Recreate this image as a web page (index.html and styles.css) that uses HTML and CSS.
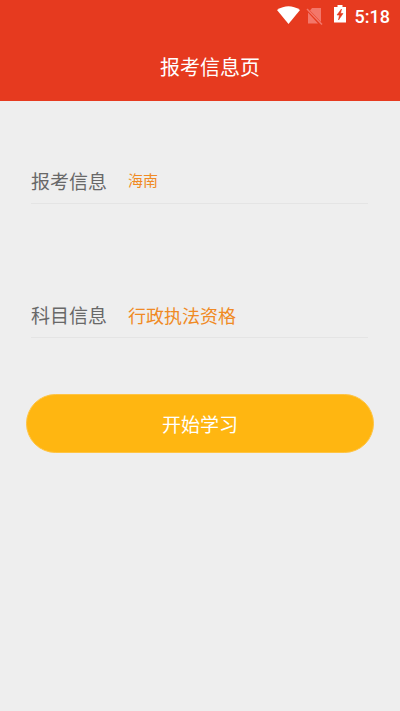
FILE: index.html
```html
<!DOCTYPE html>
<html lang="zh-CN">
<head>
<meta charset="utf-8">
<title>报考信息页</title>
<link rel="stylesheet" href="styles.css">
</head>
<body>
<header class="header">
  <div class="status">
    <svg class="wifi" width="23" height="18" viewBox="0 0 23 18"><path d="M0 4Q11.500 -3.500 23 4L11.500 18Z" fill="#fff"/></svg>
    <svg class="sim" width="17" height="18" viewBox="0 0 17 18"><path d="M6 1H15V15L4 3.500ZM2 5.500L12 16.500H2Z" fill="#f3776a"/><path d="M1 2L16 17.500" stroke="#f3776a" stroke-width="1.500"/></svg>
    <svg class="battery" width="12" height="18" viewBox="0 0 12 18"><path d="M3.500 0H8.500V2H12V17.500H0V2H3.500Z" fill="#fff"/><path d="M7.500 4L3 10H5.500L4.500 15L9 8.500H6.500Z" fill="#e63a1f" stroke="#e63a1f" stroke-width=".6"/></svg>
    <span class="time">5:18</span>
  </div>
  <h1 class="title">报考信息页</h1>
</header>
<main class="form">
  <div class="row"><span class="label">报考信息</span><span class="value small">海南</span></div>
  <div class="row second"><span class="label">科目信息</span><span class="value">行政执法资格</span></div>
  <button class="start">开始学习</button>
</main>
</body>
</html>
```

FILE: styles.css
```css
* { box-sizing: border-box; }
body { margin: 0; min-height: 711px; background: #eee; font-family: Roboto, "Noto Sans CJK SC", sans-serif; }
.header { height: 101px; background: #e63a1f; color: #fff; }
.status { height: 34px; display: flex; align-items: flex-start; padding: 6px 10px 0 0; justify-content: flex-end; }
.sim { margin-left: 6px; margin-top: 1px; }
.battery { margin-left: 11px; margin-top: -1px; }
.time { margin-left: 9px; font-size: 18px; font-weight: 500; line-height: 22px; }
.title { margin: 0 0 0 20px; padding-top: 1px; font-size: 20px; font-weight: 400; line-height: 67px; text-align: center; }
.form { padding: 58px 26px 0; }
.row { height: 45px; margin: 0 6px 0 5px; padding-bottom: 2px; display: flex; align-items: center; border-bottom: 1px solid #e4e4e4; }
.second { margin-top: 89px; }
.label { width: 97px; font-size: 19px; color: #686868; }
.value { padding-top: 5px; font-size: 18px; color: #f08a24; line-height: 26px; }
.small { padding-top: 2px; font-size: 15px; line-height: 22px; }
.start { display: block; width: 348px; height: 59px; margin-top: 56px; padding: 0; border: 1px solid #ffc443; border-radius: 30px; background: #ffb611; color: #fff; font: inherit; font-size: 19px; }
```
